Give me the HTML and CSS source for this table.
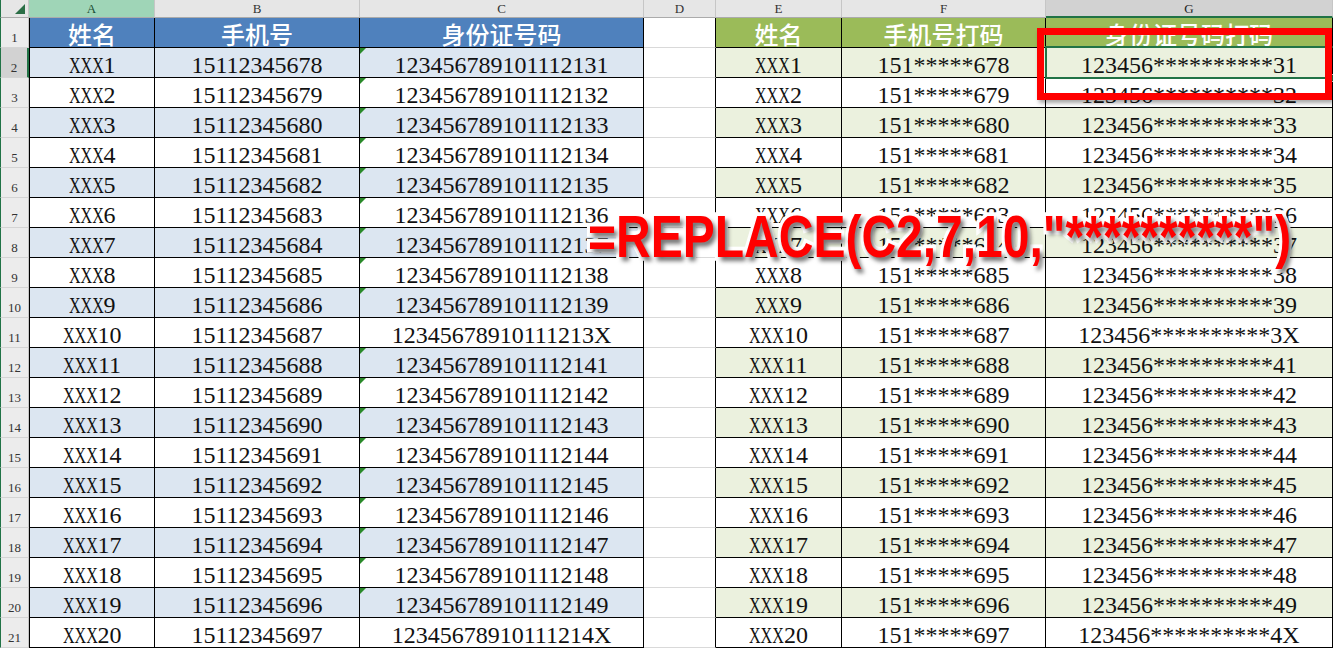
FILE: index.html
```html
<!DOCTYPE html>
<html lang="zh-CN">
<head>
<meta charset="utf-8">
<title>REPLACE</title>
<link rel="stylesheet" href="styles.css">
</head>
<body>
<div class="sheet">
  <div class="corner"><span class="corner-tri"></span></div>
  <div class="ch ch-a">A</div>
  <div class="ch">B</div>
  <div class="ch">C</div>
  <div class="ch">D</div>
  <div class="ch">E</div>
  <div class="ch">F</div>
  <div class="ch ch-g">G</div>

  <div class="rh">1</div>
  <div class="c a hb">姓名</div>
  <div class="c b hb">手机号</div>
  <div class="c k hb">身份证号码</div>
  <div class="c d"></div>
  <div class="c e hg">姓名</div>
  <div class="c f hg">手机号打码</div>
  <div class="c g hg">身份证号码打码</div>

  <div class="rh rsel">2</div>
  <div class="c a s1"><span class="xs">XXX</span>1</div>
  <div class="c b s1">15112345678</div>
  <div class="c k s1 tri">123456789101112131</div>
  <div class="c d"></div>
  <div class="c e s2"><span class="xs">XXX</span>1</div>
  <div class="c f s2">151*****678</div>
  <div class="c g s2">123456**********31</div>

  <div class="rh">3</div>
  <div class="c a"><span class="xs">XXX</span>2</div>
  <div class="c b">15112345679</div>
  <div class="c k tri">123456789101112132</div>
  <div class="c d"></div>
  <div class="c e"><span class="xs">XXX</span>2</div>
  <div class="c f">151*****679</div>
  <div class="c g">123456**********32</div>

  <div class="rh">4</div>
  <div class="c a s1"><span class="xs">XXX</span>3</div>
  <div class="c b s1">15112345680</div>
  <div class="c k s1 tri">123456789101112133</div>
  <div class="c d"></div>
  <div class="c e s2"><span class="xs">XXX</span>3</div>
  <div class="c f s2">151*****680</div>
  <div class="c g s2">123456**********33</div>

  <div class="rh">5</div>
  <div class="c a"><span class="xs">XXX</span>4</div>
  <div class="c b">15112345681</div>
  <div class="c k tri">123456789101112134</div>
  <div class="c d"></div>
  <div class="c e"><span class="xs">XXX</span>4</div>
  <div class="c f">151*****681</div>
  <div class="c g">123456**********34</div>

  <div class="rh">6</div>
  <div class="c a s1"><span class="xs">XXX</span>5</div>
  <div class="c b s1">15112345682</div>
  <div class="c k s1 tri">123456789101112135</div>
  <div class="c d"></div>
  <div class="c e s2"><span class="xs">XXX</span>5</div>
  <div class="c f s2">151*****682</div>
  <div class="c g s2">123456**********35</div>

  <div class="rh">7</div>
  <div class="c a"><span class="xs">XXX</span>6</div>
  <div class="c b">15112345683</div>
  <div class="c k tri">123456789101112136</div>
  <div class="c d"></div>
  <div class="c e"><span class="xs">XXX</span>6</div>
  <div class="c f">151*****683</div>
  <div class="c g">123456**********36</div>

  <div class="rh">8</div>
  <div class="c a s1"><span class="xs">XXX</span>7</div>
  <div class="c b s1">15112345684</div>
  <div class="c k s1 tri">123456789101112137</div>
  <div class="c d"></div>
  <div class="c e s2"><span class="xs">XXX</span>7</div>
  <div class="c f s2">151*****684</div>
  <div class="c g s2">123456**********37</div>

  <div class="rh">9</div>
  <div class="c a"><span class="xs">XXX</span>8</div>
  <div class="c b">15112345685</div>
  <div class="c k tri">123456789101112138</div>
  <div class="c d"></div>
  <div class="c e"><span class="xs">XXX</span>8</div>
  <div class="c f">151*****685</div>
  <div class="c g">123456**********38</div>

  <div class="rh">10</div>
  <div class="c a s1"><span class="xs">XXX</span>9</div>
  <div class="c b s1">15112345686</div>
  <div class="c k s1 tri">123456789101112139</div>
  <div class="c d"></div>
  <div class="c e s2"><span class="xs">XXX</span>9</div>
  <div class="c f s2">151*****686</div>
  <div class="c g s2">123456**********39</div>

  <div class="rh">11</div>
  <div class="c a"><span class="xs">XXX</span>10</div>
  <div class="c b">15112345687</div>
  <div class="c k">12345678910111213X</div>
  <div class="c d"></div>
  <div class="c e"><span class="xs">XXX</span>10</div>
  <div class="c f">151*****687</div>
  <div class="c g">123456**********3X</div>

  <div class="rh">12</div>
  <div class="c a s1"><span class="xs">XXX</span>11</div>
  <div class="c b s1">15112345688</div>
  <div class="c k s1 tri">123456789101112141</div>
  <div class="c d"></div>
  <div class="c e s2"><span class="xs">XXX</span>11</div>
  <div class="c f s2">151*****688</div>
  <div class="c g s2">123456**********41</div>

  <div class="rh">13</div>
  <div class="c a"><span class="xs">XXX</span>12</div>
  <div class="c b">15112345689</div>
  <div class="c k tri">123456789101112142</div>
  <div class="c d"></div>
  <div class="c e"><span class="xs">XXX</span>12</div>
  <div class="c f">151*****689</div>
  <div class="c g">123456**********42</div>

  <div class="rh">14</div>
  <div class="c a s1"><span class="xs">XXX</span>13</div>
  <div class="c b s1">15112345690</div>
  <div class="c k s1 tri">123456789101112143</div>
  <div class="c d"></div>
  <div class="c e s2"><span class="xs">XXX</span>13</div>
  <div class="c f s2">151*****690</div>
  <div class="c g s2">123456**********43</div>

  <div class="rh">15</div>
  <div class="c a"><span class="xs">XXX</span>14</div>
  <div class="c b">15112345691</div>
  <div class="c k tri">123456789101112144</div>
  <div class="c d"></div>
  <div class="c e"><span class="xs">XXX</span>14</div>
  <div class="c f">151*****691</div>
  <div class="c g">123456**********44</div>

  <div class="rh">16</div>
  <div class="c a s1"><span class="xs">XXX</span>15</div>
  <div class="c b s1">15112345692</div>
  <div class="c k s1 tri">123456789101112145</div>
  <div class="c d"></div>
  <div class="c e s2"><span class="xs">XXX</span>15</div>
  <div class="c f s2">151*****692</div>
  <div class="c g s2">123456**********45</div>

  <div class="rh">17</div>
  <div class="c a"><span class="xs">XXX</span>16</div>
  <div class="c b">15112345693</div>
  <div class="c k tri">123456789101112146</div>
  <div class="c d"></div>
  <div class="c e"><span class="xs">XXX</span>16</div>
  <div class="c f">151*****693</div>
  <div class="c g">123456**********46</div>

  <div class="rh">18</div>
  <div class="c a s1"><span class="xs">XXX</span>17</div>
  <div class="c b s1">15112345694</div>
  <div class="c k s1 tri">123456789101112147</div>
  <div class="c d"></div>
  <div class="c e s2"><span class="xs">XXX</span>17</div>
  <div class="c f s2">151*****694</div>
  <div class="c g s2">123456**********47</div>

  <div class="rh">19</div>
  <div class="c a"><span class="xs">XXX</span>18</div>
  <div class="c b">15112345695</div>
  <div class="c k tri">123456789101112148</div>
  <div class="c d"></div>
  <div class="c e"><span class="xs">XXX</span>18</div>
  <div class="c f">151*****695</div>
  <div class="c g">123456**********48</div>

  <div class="rh">20</div>
  <div class="c a s1"><span class="xs">XXX</span>19</div>
  <div class="c b s1">15112345696</div>
  <div class="c k s1 tri">123456789101112149</div>
  <div class="c d"></div>
  <div class="c e s2"><span class="xs">XXX</span>19</div>
  <div class="c f s2">151*****696</div>
  <div class="c g s2">123456**********49</div>

  <div class="rh">21</div>
  <div class="c a"><span class="xs">XXX</span>20</div>
  <div class="c b">15112345697</div>
  <div class="c k">12345678910111214X</div>
  <div class="c d"></div>
  <div class="c e"><span class="xs">XXX</span>20</div>
  <div class="c f">151*****697</div>
  <div class="c g">123456**********4X</div>

  <div class="selection"><span class="handle"></span></div>
  <div class="redbox"></div>
  <div class="formula">=REPLACE(C2,7,10,"**********")</div>
</div>
</body>
</html>
```
FILE: styles.css
```css
html, body {
  margin: 0;
  padding: 0;
  background: #ffffff;
  overflow: hidden;
}

.sheet {
  position: relative;
  width: 1333px;
  height: 650px;
  overflow: hidden;
  display: grid;
  grid-template-columns: 29px 126px 205px 284px 72px 126px 204px 287px;
  grid-template-rows: 18px;
  grid-auto-rows: 30px;
  align-content: start;
}

.corner {
  box-sizing: border-box;
  background: #e6e6e6;
  border-left: 1px solid #217346;
  border-right: 1px solid #c6c6c6;
  border-bottom: 1px solid #ababab;
  display: flex;
  justify-content: flex-end;
  align-items: flex-end;
  padding: 0 3px 3px 0;
}

.corner-tri {
  width: 0;
  height: 0;
  border-left: 10px solid transparent;
  border-bottom: 10px solid #2b6e46;
}

.ch {
  box-sizing: border-box;
  background: #e6e6e6;
  border-right: 1px solid #c6c6c6;
  border-bottom: 1px solid #ababab;
  font: 13px/18px "Liberation Serif", serif;
  color: #333;
  text-align: center;
}

.ch-a {
  background: #9fd5b7;
  color: #1b4d33;
}

.ch-g {
  background: #d2d2d2;
  border-bottom: 2px solid #217346;
  color: #222;
}

.rh {
  box-sizing: border-box;
  background: #ececec;
  border-left: 1px solid #217346;
  border-right: 1px solid #c6c6c6;
  border-bottom: 1px solid #d4d4d4;
  font: 13px/14px "Liberation Serif", serif;
  color: #333;
  display: flex;
  justify-content: center;
  align-items: flex-end;
  padding-bottom: 2px;
}

.rsel {
  background: #d2d2d2;
  border-right: 2px solid #217346;
}

.c {
  position: relative;
  box-sizing: border-box;
  border-right: 1px solid #000;
  border-bottom: 1px solid #000;
  display: flex;
  justify-content: center;
  align-items: flex-end;
  font: 24px/24px "Liberation Serif", serif;
  color: #111;
  white-space: nowrap;
  background: #fff;
}

.a {
  border-left: 1px solid #000;
}

.d {
  border-bottom: 1px solid #d9d9d9;
}

.xs {
  display: inline-block;
  width: 35px;
  transform: scaleX(0.67);
  transform-origin: left bottom;
}

.hb, .hg {
  align-items: center;
  font: 500 24px/28px "Noto Sans CJK SC", "Noto Sans", sans-serif;
  color: #fff;
  padding-top: 2px;
}

.hb {
  background: #4f81bd;
}

.hg {
  background: #9bbb59;
}

.s1 {
  background: #dce6f1;
}

.s2 {
  background: #ebf1de;
}

.tri::before {
  content: "";
  position: absolute;
  left: 0;
  top: 0;
  width: 0;
  height: 0;
  border-top: 6px solid #2a8a2a;
  border-right: 6px solid transparent;
}

.selection {
  position: absolute;
  left: 1045px;
  top: 46px;
  width: 296px;
  height: 33px;
  box-sizing: border-box;
  border: 2px solid #217346;
}

.handle {
  position: absolute;
  left: 281px;
  top: 26px;
  width: 6px;
  height: 6px;
  background: #217346;
  border: 1px solid #fff;
}

.redbox {
  position: absolute;
  left: 1037px;
  top: 28px;
  width: 295px;
  height: 72px;
  box-sizing: border-box;
  border: 7px solid #ff0000;
  box-shadow: 2px 3px 4px rgba(0, 0, 0, 0.35);
}

.formula {
  position: absolute;
  left: 588px;
  top: 207px;
  font: bold 48px/48px "Liberation Sans", Arial, sans-serif;
  color: #ff0000;
  white-space: nowrap;
  transform: scaleY(1.25);
  transform-origin: left top;
  -webkit-text-stroke: 6px #ffffff;
  paint-order: stroke fill;
  text-shadow: 3px 3px 4px rgba(0, 0, 0, 0.55);
}
```
